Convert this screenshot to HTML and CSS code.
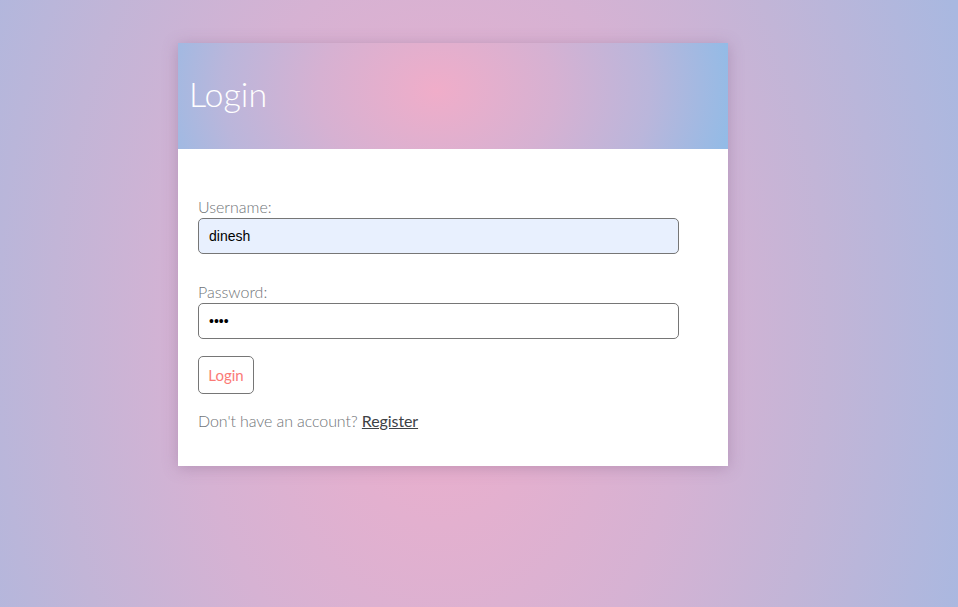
FILE: index.html
```html
<!DOCTYPE html>
<html>
<head>
<meta charset="utf-8">
<link rel="stylesheet" href="styles.css">
</head>
<body>
<div class="card">
  <div class="card-header"><h1>Login</h1></div>
  <form class="card-body">
    <label class="label" for="u">Username:</label>
    <input class="field filled" id="u" type="text" value="dinesh">
    <label class="label second" for="p">Password:</label>
    <input class="field" id="p" type="password" value="1234">
    <button class="btn" type="button">Login</button>
    <p class="note">Don't have an account? <a href="#">Register</a></p>
  </form>
</div>
</body>
</html>
```
FILE: styles.css
```css
html {
  min-height: 100%;
  background: radial-gradient(ellipse 58% 140% at 46% 55%, #f0aecb 0%, #d6b2d3 45%, #c2b5d7 70%, #a9b8e0 100%);
}
body {
  margin: 0;
  padding-top: 43px;
  font-family: "Lato", "Open Sans", sans-serif;
  min-height: 564px;
}
.card {
  width: 550px;
  margin-left: 178px;
  background: #fff;
  box-shadow: 0 2px 14px rgba(120, 90, 130, 0.35);
}
.card-header {
  height: 106px;
  display: flex;
  align-items: center;
  padding-left: 11px;
  background: radial-gradient(ellipse 54% 220% at 47% 45%, #f0adc9 0%, #d6b1d2 40%, #bab6db 72%, #93bbe6 100%);
}
.card-header h1 {
  margin: 0 0 5px;
  color: #fff;
  font-weight: 300;
  font-size: 34px;
  line-height: 1;
}
.card-body {
  padding: 48px 20px 36px;
  display: flex;
  flex-direction: column;
  align-items: flex-start;
}
.label {
  color: #6f7478;
  font-size: 16px;
  font-weight: 300;
  line-height: 19px;
  margin-bottom: 2px;
}
.label.second {
  margin-top: 28px;
}
.field {
  box-sizing: border-box;
  width: 481px;
  height: 36px;
  border: 1px solid #767676;
  border-radius: 5px;
  padding: 0 10px;
  font-family: "Liberation Sans", Arial, sans-serif;
  font-size: 14px;
  color: #000;
  background: #fff;
  margin: 0;
}
.field.filled {
  background: #e8f0fe;
}
.btn {
  margin-top: 17px;
  box-sizing: border-box;
  width: 56px;
  height: 38px;
  border: 1px solid #767676;
  border-radius: 5px;
  background: #fff;
  color: #fb7a76;
  font-family: "Lato", "Open Sans", sans-serif;
  font-size: 15px;
  padding: 0;
}
.note {
  margin: 17px 0 0;
  font-size: 16px;
  font-weight: 300;
  color: #6f7478;
  line-height: 19px;
  letter-spacing: -0.1px;
}
.note a {
  color: #3d4246;
  font-weight: 400;
}
```
